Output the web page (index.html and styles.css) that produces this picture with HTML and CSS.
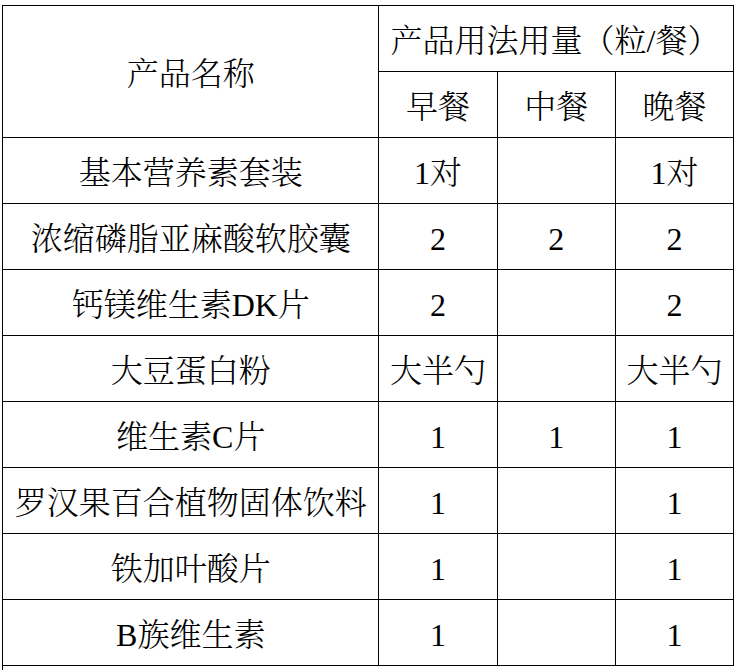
FILE: index.html
```html
<!DOCTYPE html>
<html lang="zh-CN">
<head>
<meta charset="utf-8">
<title>产品用法用量</title>
<link rel="stylesheet" href="styles.css">
</head>
<body>
<div class="page">
  <table class="dose">
    <colgroup>
      <col class="c-name">
      <col class="c-meal">
      <col class="c-meal">
      <col class="c-meal">
    </colgroup>
    <thead>
      <tr>
        <th rowspan="2">产品名称</th>
        <th colspan="3" class="usage">产品用法用量（粒/餐）</th>
      </tr>
      <tr>
        <th>早餐</th>
        <th>中餐</th>
        <th>晚餐</th>
      </tr>
    </thead>
    <tbody>
      <tr><td>基本营养素套装</td><td>1对</td><td></td><td>1对</td></tr>
      <tr><td>浓缩磷脂亚麻酸软胶囊</td><td>2</td><td>2</td><td>2</td></tr>
      <tr><td>钙镁维生素DK片</td><td>2</td><td></td><td>2</td></tr>
      <tr><td>大豆蛋白粉</td><td>大半勺</td><td></td><td>大半勺</td></tr>
      <tr><td>维生素C片</td><td>1</td><td>1</td><td>1</td></tr>
      <tr><td>罗汉果百合植物固体饮料</td><td>1</td><td></td><td>1</td></tr>
      <tr><td>铁加叶酸片</td><td>1</td><td></td><td>1</td></tr>
      <tr><td>B族维生素</td><td>1</td><td></td><td>1</td></tr>
    </tbody>
  </table>
  <div class="tail"></div>
</div>
</body>
</html>
```
FILE: styles.css
```css
html, body {
  margin: 0;
  padding: 0;
  background: #fff;
}

.page {
  padding: 5px 0 0 2px;
  width: 736px;
  height: 670px;
  box-sizing: border-box;
  overflow: hidden;
}

.dose {
  border-collapse: collapse;
  table-layout: fixed;
  width: 732px;
  font-family: "Liberation Serif", "Noto Serif CJK SC", "Noto Sans CJK SC", serif;
  font-size: 32px;
  font-weight: 300;
  color: #000;
}

.c-name { width: 376px; }
.c-meal { width: 118px; }

.dose th,
.dose td {
  border: 1px solid #000;
  height: 66px;
  padding: 0;
  text-align: center;
  vertical-align: middle;
  font-weight: 300;
  line-height: 1;
  white-space: nowrap;
  padding-top: 5px;
  box-sizing: border-box;
}

.dose .usage {
  text-align: left;
  padding-left: 11px;
}

.tail {
  width: 0;
  height: 6px;
  border-left: 1px solid #000;
  margin-left: 0;
}
```
